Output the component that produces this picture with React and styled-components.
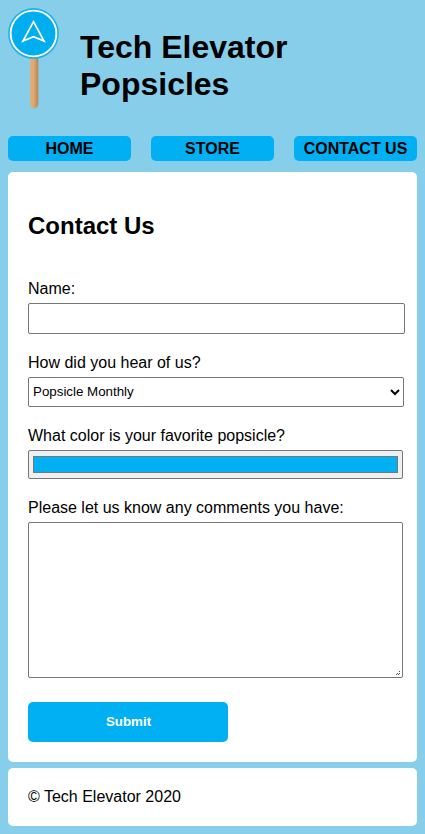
import React from "react";
import styled, { createGlobalStyle } from "styled-components";

const GlobalStyle = createGlobalStyle`
  *, *::before, *::after { box-sizing: border-box; }
  body {
    margin: 8px;
    background: #87ceeb;
    color: #000;
    font-family: Arial, "Liberation Sans", sans-serif;
    font-size: 16px;
    line-height: 18px;
  }
`;

const Page = styled.div`
  display: flex;
  flex-direction: column;
`;

const Header = styled.header`
  display: flex;
  height: 128px;
`;

const Logo = styled.svg`
  display: block;
  flex: none;
  width: 53px;
  height: 101px;
`;

const Title = styled.h1`
  margin: 21px 0 0 19px;
  width: 240px;
  font-size: 32px;
  line-height: 37px;
  font-weight: bold;
`;

const Nav = styled.nav`
  display: grid;
  grid-template-columns: repeat(3, 1fr);
  column-gap: 20px;
  margin-bottom: 11px;
`;

const NavLink = styled.a`
  height: 25px;
  border-radius: 5px;
  background: #00b0f3;
  color: #000;
  font-weight: bold;
  line-height: 25px;
  text-align: center;
  text-decoration: none;
  white-space: nowrap;
`;

const Card = styled.main`
  height: 590px;
  padding: 40px 12px 20px 20px;
  border-radius: 5px;
  background: #fff;
`;

const Heading = styled.h2`
  margin: 0 0 40px;
  font-size: 24px;
  line-height: 28px;
`;

const Form = styled.form`
  display: flex;
  flex-direction: column;
  align-items: flex-start;
`;

const Field = styled.div`
  display: flex;
  flex-direction: column;
  margin-bottom: ${(p) => p.$after}px;
`;

const Label = styled.label`
  margin-bottom: 5px;
`;

const TextInput = styled.input`
  width: 377px;
  height: 31px;
  margin: 0;
  border: 1px solid #767676;
  border-radius: 2px;
  background: #fff;
`;

const Select = styled.select`
  width: 376px;
  height: 30px;
  margin: 0;
  padding: 0 0 1px;
  border: 1px solid #767676;
  border-radius: 2px;
  background: #fff;
  color: #000;
  font: 13.333px Arial, "Liberation Sans", sans-serif;
`;

const ColorInput = styled.input`
  width: 375px;
  height: 29px;
  margin: 0;
  padding: 1px 2px;
  border: 1px solid #767676;
  border-radius: 2px;
  background: #efefef;
`;

const CommentsBox = styled.div`
  position: relative;
  width: 375px;
  height: 156px;
`;

const Comments = styled.textarea`
  display: block;
  width: 100%;
  height: 100%;
  margin: 0;
  border: 1px solid #767676;
  border-radius: 2px;
  background: #fff;
  resize: none;
`;

const ResizeGrip = styled.svg`
  position: absolute;
  right: 2px;
  bottom: 2px;
  width: 5px;
  height: 5px;
  pointer-events: none;
`;

const Submit = styled.button`
  width: 200px;
  height: 40px;
  padding: 0 0 2px 1px;
  border: 0;
  border-radius: 5px;
  background: #00b0f3;
  color: #fff;
  font: bold 13.333px Arial, "Liberation Sans", sans-serif;
`;

const Footer = styled.footer`
  height: 58px;
  margin-top: 6px;
  padding: 20px;
  border-radius: 5px;
  background: #fff;
`;

function PopsicleLogo() {
  return (
    <Logo viewBox="0 0 53 101" aria-label="Popsicle">
      <defs>
        <linearGradient id="stick" x1="0" x2="1" y1="0" y2="0">
          <stop offset="0" stopColor="#ddb080" />
          <stop offset="0.45" stopColor="#dba874" />
          <stop offset="1" stopColor="#bd814f" />
        </linearGradient>
      </defs>
      <path d="M22 48h8.3v48a4.15 4.15 0 0 1-8.3 0z" fill="url(#stick)" />
      <circle cx="25.5" cy="25.5" r="25.4" fill="#1cb0eb" />
      <circle cx="25.5" cy="25.5" r="22.9" fill="#00aeef" stroke="#fff" strokeWidth="1.9" />
      <path
        d="M25.5 13.7L36 33L25.5 28.6L15 33Z"
        fill="none"
        stroke="#fff"
        strokeWidth="1.7"
      />
    </Logo>
  );
}

export default function App() {
  return (
    <Page>
      <GlobalStyle />
      <Header>
        <PopsicleLogo />
        <Title>Tech Elevator Popsicles</Title>
      </Header>
      <Nav>
        <NavLink href="#home">HOME</NavLink>
        <NavLink href="#store">STORE</NavLink>
        <NavLink href="#contact">CONTACT US</NavLink>
      </Nav>
      <Card>
        <Heading>Contact Us</Heading>
        <Form>
          <Field $after={20}>
            <Label htmlFor="name">Name:</Label>
            <TextInput id="name" type="text" />
          </Field>
          <Field $after={20}>
            <Label htmlFor="source">How did you hear of us?</Label>
            <Select id="source">
              <option>Popsicle Monthly</option>
            </Select>
          </Field>
          <Field $after={20}>
            <Label htmlFor="color">What color is your favorite popsicle?</Label>
            <ColorInput id="color" type="color" defaultValue="#00b0f3" />
          </Field>
          <Field $after={24}>
            <Label htmlFor="comments">Please let us know any comments you have:</Label>
            <CommentsBox>
              <Comments id="comments" />
              <ResizeGrip viewBox="0 0 5 5" shapeRendering="crispEdges">
                <path d="M3 0h1v1h-1zM1 2h1v1h-1zM3 2h1v1h-1zM0 3h1v1h-1zM2 3h1v1h-1z" fill="#555" />
              </ResizeGrip>
            </CommentsBox>
          </Field>
          <Submit type="button">Submit</Submit>
        </Form>
      </Card>
      <Footer>© Tech Elevator 2020</Footer>
    </Page>
  );
}
